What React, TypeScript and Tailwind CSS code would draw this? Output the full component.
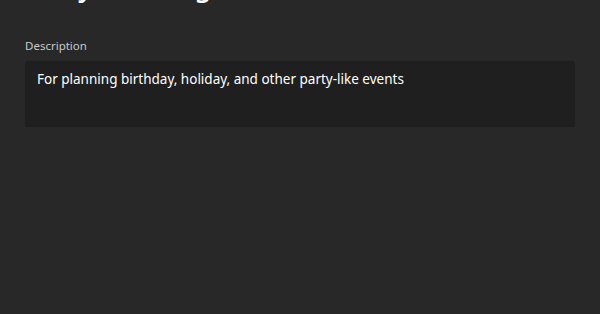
export default function App() {
  return (
    <main
      className="flex flex-col w-[600px] h-[314px] overflow-hidden bg-[#282828] px-[25px]"
      style={{ fontFamily: '"Noto Sans", "Open Sans", sans-serif' }}
    >
      {/* title scrolled mostly out of view */}
      <h1 className="mt-[-30px] h-[34px] text-[26px] leading-[34px] font-semibold text-white whitespace-nowrap">
        Party Planning
      </h1>

      <label className="block mt-[34px] text-[11.5px] leading-[16px] text-[#c8c8c8]">
        Description
      </label>
      <div className="mt-[7px] h-[66px] rounded-[3px] bg-[#1f1f1f] px-[12px] pt-[8px] text-[13.5px] leading-[20px] text-white">
        For planning birthday, holiday, and other party-like events
      </div>
    </main>
  );
}
